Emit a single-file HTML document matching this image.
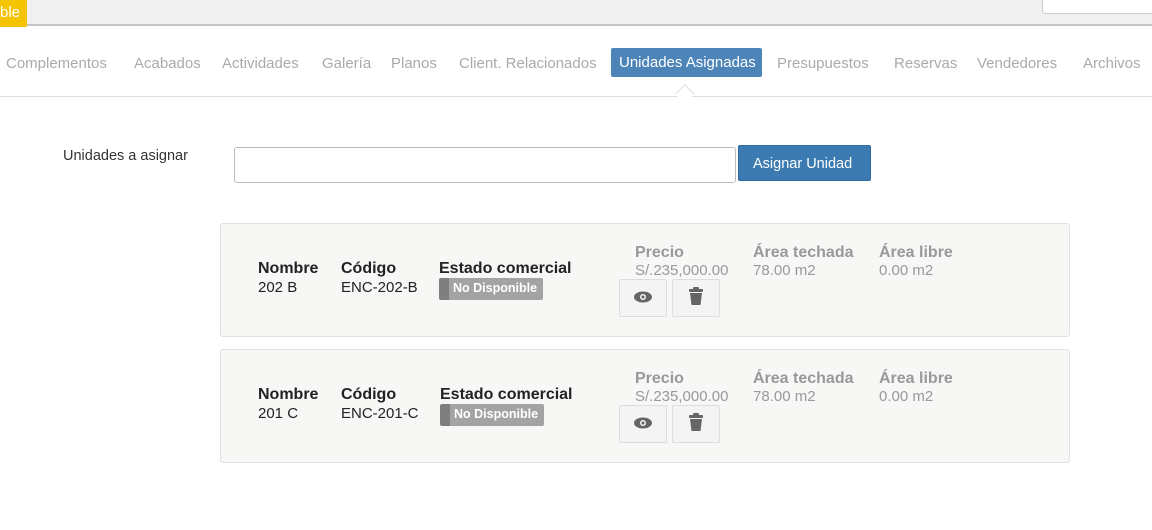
<!DOCTYPE html>
<html><head><style>
*{box-sizing:border-box;margin:0;padding:0}
body{width:1152px;height:530px;background:#fff;font-family:"Liberation Sans",sans-serif;position:relative;overflow:hidden;color:#333}
.a{position:absolute;white-space:nowrap}
.tab{position:absolute;top:55px;font-size:15px;color:#aaa}
.card{position:absolute;left:220px;width:850px;height:114px;background:#f7f7f5;border:1px solid #e2e2e2;border-radius:3px}
.h{font-size:16px;font-weight:bold;color:#222}
.v{font-size:15px;color:#222}
.g{font-size:16px;font-weight:bold;color:#999}
.gv{font-size:15px;color:#999}
.badge{position:absolute;height:22px;width:104px;background:#a3a3a3;border-radius:2px;color:#fff;font-size:12.5px;font-weight:bold;padding:3px 0 0 4px;border-left:10px solid #7f7f7f;white-space:nowrap;overflow:hidden}
.btn{position:absolute;width:48px;height:38px;border:1px solid #ddd;background:#f4f4f4;border-radius:2px}
</style></head><body>
<div class="a" style="left:0;top:0;width:1152px;height:26px;background:#f0f0f0;border-bottom:2px solid #c4c4c4"></div>
<div class="a" style="left:0;top:0;width:27px;height:27px;background:#f5c400;color:#fff;font-size:15px;padding:4px 0 0 0">ble</div>
<div class="a" style="left:1042px;top:0;width:112px;height:14px;background:#fff;border:1px solid #ccc;border-top:none;border-radius:0 0 0 3px"></div>
<div class="tab" style="left:6px">Complementos</div>
<div class="tab" style="left:134px">Acabados</div>
<div class="tab" style="left:222px">Actividades</div>
<div class="tab" style="left:322px">Galería</div>
<div class="tab" style="left:391px">Planos</div>
<div class="tab" style="left:459px">Client. Relacionados</div>
<div class="a" style="left:611px;top:48px;width:151px;height:29px;background:#4d85b8;border-radius:2px;color:#fff;font-size:15px;padding:6px 0 0 8px">Unidades Asignadas</div>
<div class="tab" style="left:777px">Presupuestos</div>
<div class="tab" style="left:894px">Reservas</div>
<div class="tab" style="left:977px">Vendedores</div>
<div class="tab" style="left:1083px">Archivos</div>
<div class="a" style="left:0;top:96px;width:1152px;height:1px;background:#ddd"></div>
<div class="a" style="left:678px;top:87px;width:14px;height:14px;background:#fff;border-left:1px solid #ddd;border-top:1px solid #ddd;transform:rotate(45deg)"></div>
<div class="a" style="left:63px;top:148px;font-size:14.5px;color:#333">Unidades a asignar</div>
<div class="a" style="left:234px;top:147px;width:502px;height:36px;border:1px solid #bbb;border-radius:3px;background:#fff"></div>
<div class="a" style="left:738px;top:145px;width:133px;height:36px;background:#3b7bb2;border:1px solid #2f6aa0;border-radius:2px;color:#fff;font-size:14.5px;padding:10px 0 0 14px">Asignar Unidad</div>

<div class="card" style="top:223px"></div>
<div class="card" style="top:349px"></div>

<div class="a h" style="left:258px;top:260px">Nombre</div><div class="a v" style="left:258px;top:279px">202 B</div>
<div class="a h" style="left:341px;top:260px">Código</div><div class="a v" style="left:341px;top:279px">ENC-202-B</div>
<div class="a h" style="left:439px;top:260px">Estado comercial</div>
<div class="badge" style="left:439px;top:278px">No Disponible</div>
<div class="a g" style="left:635px;top:244px">Precio</div><div class="a gv" style="left:635px;top:262px">S/.235,000.00</div>
<div class="a g" style="left:753px;top:244px">Área techada</div><div class="a gv" style="left:753px;top:262px">78.00 m2</div>
<div class="a g" style="left:879px;top:244px">Área libre</div><div class="a gv" style="left:879px;top:262px">0.00 m2</div>
<div class="btn" style="left:619px;top:279px"></div><div class="btn" style="left:672px;top:279px"></div>

<div class="a h" style="left:258px;top:386px">Nombre</div><div class="a v" style="left:258px;top:405px">201 C</div>
<div class="a h" style="left:341px;top:386px">Código</div><div class="a v" style="left:341px;top:405px">ENC-201-C</div>
<div class="a h" style="left:440px;top:386px">Estado comercial</div>
<div class="badge" style="left:440px;top:404px">No Disponible</div>
<div class="a g" style="left:635px;top:370px">Precio</div><div class="a gv" style="left:635px;top:388px">S/.235,000.00</div>
<div class="a g" style="left:753px;top:370px">Área techada</div><div class="a gv" style="left:753px;top:388px">78.00 m2</div>
<div class="a g" style="left:879px;top:370px">Área libre</div><div class="a gv" style="left:879px;top:388px">0.00 m2</div>
<div class="btn" style="left:619px;top:405px"></div><div class="btn" style="left:672px;top:405px"></div>

<svg class="a" style="left:0;top:0" width="1152" height="530">
<g fill="#666">
<ellipse cx="643" cy="297" rx="9" ry="5.5"/><circle cx="643" cy="297" r="3" fill="#f4f4f4"/><circle cx="643" cy="297" r="1.5"/>
<ellipse cx="643" cy="423" rx="9" ry="5.5"/><circle cx="643" cy="423" r="3" fill="#f4f4f4"/><circle cx="643" cy="423" r="1.5"/>
<rect x="689" y="289" width="14" height="3" rx="1"/><rect x="693" y="287" width="6" height="3" rx="1"/><path d="M690 293h12l-1.5 12h-9z"/>
<rect x="689" y="415" width="14" height="3" rx="1"/><rect x="693" y="413" width="6" height="3" rx="1"/><path d="M690 419h12l-1.5 12h-9z"/>
</g></svg>
</body></html>
